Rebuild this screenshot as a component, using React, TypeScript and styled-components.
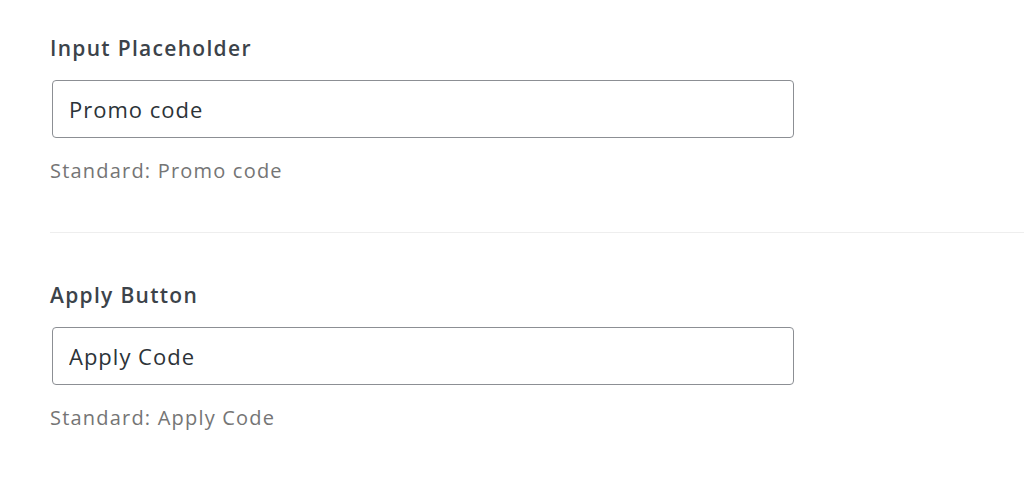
import styled, { createGlobalStyle } from 'styled-components'

const GlobalStyle = createGlobalStyle`
    body {
        margin: 0;
        background: #ffffff;
        font-family: "Open Sans", "Noto Sans", sans-serif;
    }
`;

const StyledPage = styled.div`
    width: 1024px;
    height: 480px;
    overflow: hidden;
    padding-top: 34px;
    box-sizing: border-box;
`;

const StyledField = styled.div`
    display: flex;
    flex-direction: column;
    padding-left: 50px;
`;

const StyledLabel = styled.label`
    color: #3c434a;
    font-size: 21px;
    font-weight: 600;
    letter-spacing: 1.3px;
    line-height: 28px;
    margin-bottom: 18px;
`;

const StyledInput = styled.input`
    width: 742px;
    height: 58px;
    margin-left: 2px;
    box-sizing: border-box;
    border: 1.5px solid #8c8f94;
    border-radius: 4px;
    padding: 0 16px;
    color: #2c3338;
    font-family: "Open Sans", "Noto Sans", sans-serif;
    font-size: 22px;
    letter-spacing: 1px;
    outline: none;
`;

const StyledHelp = styled.p`
    margin: 20px 0 0;
    color: #757575;
    font-size: 20px;
    letter-spacing: 1.2px;
    line-height: 26px;
`;

const StyledDivider = styled.hr`
    border: none;
    border-top: 1.5px solid #eeeeee;
    margin: 48px 0 48px 50px;
`;

const fields = [
    { label: 'Input Placeholder', value: 'Promo code' },
    { label: 'Apply Button', value: 'Apply Code' },
]

const App = () => {
    return (
        <StyledPage>
            <GlobalStyle />
            {fields.map((field, i) => (
                <div key={field.label}>
                    {i > 0 && <StyledDivider />}
                    <StyledField>
                        <StyledLabel>{field.label}</StyledLabel>
                        <StyledInput defaultValue={field.value} />
                        <StyledHelp>Standard: {field.value}</StyledHelp>
                    </StyledField>
                </div>
            ))}
        </StyledPage>
    )
}

export default App
